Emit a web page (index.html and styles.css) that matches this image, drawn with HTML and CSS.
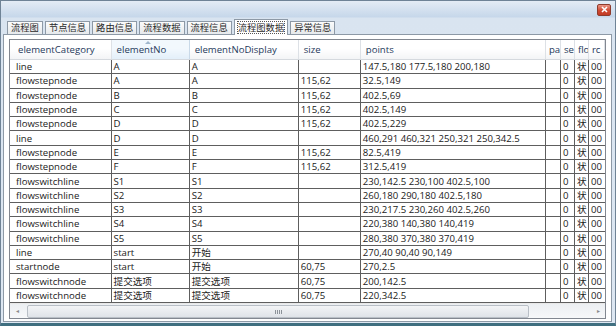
FILE: index.html
```html
<!DOCTYPE html>
<html lang="zh">
<head>
  <meta charset="UTF-8">
  <title>流程图数据</title>
  <link rel="stylesheet" href="styles.css">
</head>
<body>
  <div class="window">
    <div class="titlebar">
      <span class="close-btn" aria-label="Close">
        <svg width="7" height="7" viewBox="0 0 7 7"><path d="M1 1 L6 6 M6 1 L1 6" stroke="#fff" stroke-width="1.6"/></svg>
      </span>
    </div>
    <div class="tabs">
      <span class="tab">流程图</span>
      <span class="tab">节点信息</span>
      <span class="tab">路由信息</span>
      <span class="tab">流程数据</span>
      <span class="tab">流程信息</span>
      <span class="tab active"><span class="focus">流程图数据</span></span>
      <span class="tab">异常信息</span>
    </div>
    <div class="panel">
      <div class="grid">
        <table>
          <colgroup>
            <col style="width:101px">
            <col style="width:78px">
            <col style="width:109px">
            <col style="width:62px">
            <col style="width:185px">
            <col style="width:15px">
            <col style="width:14px">
            <col style="width:14px">
            <col style="width:16px">
          </colgroup>
          <thead>
            <tr>
              <th>elementCategory</th>
              <th class="sorted">elementNo<span class="sort-arrow"></span></th>
              <th>elementNoDisplay</th>
              <th>size</th>
              <th>points</th>
              <th class="narrow">pa</th>
              <th class="narrow">se</th>
              <th class="narrow">flo</th>
              <th class="narrow">rc</th>
            </tr>
          </thead>
          <tbody id="rows"></tbody>
        </table>
        <div class="hscroll">
          <span class="arrow left">&#9666;</span>
          <div class="track">
            <div class="thumb"><span class="grip"></span></div>
          </div>
          <span class="arrow right">&#9656;</span>
        </div>
      </div>
    </div>
  </div>

  <script>
    const data = [
      ["line", "A", "A", "", "147.5,180 177.5,180 200,180"],
      ["flowstepnode", "A", "A", "115,62", "32.5,149"],
      ["flowstepnode", "B", "B", "115,62", "402.5,69"],
      ["flowstepnode", "C", "C", "115,62", "402.5,149"],
      ["flowstepnode", "D", "D", "115,62", "402.5,229"],
      ["line", "D", "D", "", "460,291 460,321 250,321 250,342.5"],
      ["flowstepnode", "E", "E", "115,62", "82.5,419"],
      ["flowstepnode", "F", "F", "115,62", "312.5,419"],
      ["flowswitchline", "S1", "S1", "", "230,142.5 230,100 402.5,100"],
      ["flowswitchline", "S2", "S2", "", "260,180 290,180 402.5,180"],
      ["flowswitchline", "S3", "S3", "", "230,217.5 230,260 402.5,260"],
      ["flowswitchline", "S4", "S4", "", "220,380 140,380 140,419"],
      ["flowswitchline", "S5", "S5", "", "280,380 370,380 370,419"],
      ["line", "start", "开始", "", "270,40 90,40 90,149"],
      ["startnode", "start", "开始", "60,75", "270,2.5"],
      ["flowswitchnode", "提交选项", "提交选项", "60,75", "200,142.5"],
      ["flowswitchnode", "提交选项", "提交选项", "60,75", "220,342.5"]
    ];

    const tbody = document.getElementById("rows");
    data.forEach(row => {
      const tr = document.createElement("tr");
      row.concat(["", "0", "状", "00"]).forEach(value => {
        const td = document.createElement("td");
        td.textContent = value;
        tr.appendChild(td);
      });
      tbody.appendChild(tr);
    });
  </script>
</body>
</html>
```

FILE: styles.css
```css
body {
  margin: 0;
  background: #ffffff;
  font-family: 'Open Sans', 'Noto Sans CJK SC', sans-serif;
}

.window {
  box-sizing: border-box;
  width: 616px;
  height: 326px;
  border: 1px solid #6f8396;
  border-bottom: 3px solid #3f6f80;
  background: linear-gradient(#e4ecf5 0, #c6d7ea 16px, #d9e4f0 17px, #dde7f2 100%);
  display: flex;
  flex-direction: column;
}

.titlebar {
  height: 17px;
  display: flex;
  justify-content: flex-end;
  align-items: center;
  padding-right: 4px;
}

.close-btn {
  width: 12px;
  height: 10px;
  border: 1px solid #8e3b2c;
  border-radius: 2px;
  background: linear-gradient(#e99585, #cf4a33 55%, #c23a24);
  display: flex;
  align-items: center;
  justify-content: center;
}

.tabs {
  height: 16px;
  display: flex;
  align-items: flex-end;
  padding-left: 6px;
  gap: 2px;
  font-size: 9.3px;
  color: #2a2a2a;
}

.tab {
  height: 12px;
  line-height: 12px;
  padding: 0 3px;
  border: 1px solid #8d99a6;
  border-bottom: none;
  background: linear-gradient(#fbfbfb, #e6e9ec);
  white-space: nowrap;
}

.tab.active {
  height: 15px;
  line-height: 15px;
  background: #ffffff;
  position: relative;
  top: 1px;
  padding: 0 2px;
}

.focus {
  outline: 1px dotted #555;
  outline-offset: -1px;
  padding: 0 1px;
}

.panel {
  flex: 1;
  margin: 0 3px 1px 2px;
  border: 1px solid #8d99a6;
  background: #ffffff;
  padding: 4px 5px 1px 5px;
}

.grid {
  border: 1px solid #828790;
  box-sizing: border-box;
  width: 597px;
}

table {
  border-collapse: collapse;
  table-layout: fixed;
  width: 595px;
  font-size: 9.6px;
  color: #1a1a1a;
}

th {
  height: 19px;
  padding: 0 0 0 5px;
  font-weight: normal;
  text-align: left;
  color: #1e395b;
  background: linear-gradient(#ffffff 45%, #f3f4f6);
  border-right: 1px solid #dde1e6;
  border-bottom: 1px solid #d5d9de;
  white-space: nowrap;
  overflow: hidden;
  position: relative;
}

th:first-child {
  padding-left: 8px;
}

th.narrow {
  padding-left: 3px;
  text-overflow: clip;
}

th.sorted {
  background: linear-gradient(#f2f8fd 45%, #e3eff9);
  border-right-color: #c9d9e8;
}

.sort-arrow {
  position: absolute;
  top: 1px;
  left: 33px;
  width: 0;
  height: 0;
  border-left: 3px solid transparent;
  border-right: 3px solid transparent;
  border-bottom: 3px solid #9fb6cc;
}

td {
  height: 13.3px;
  padding: 0 0 0 2px;
  border: 1px solid #5e5e5e;
  white-space: nowrap;
  overflow: hidden;
  line-height: 13px;
}

td:first-child {
  border-left: none;
  padding-left: 6px;
}

td:last-child {
  border-right: none;
}

.hscroll {
  height: 14px;
  display: flex;
  align-items: center;
  background: linear-gradient(#eceff2, #f7f8f9);
  border-top: 1px solid #e8e8e8;
}

.arrow {
  width: 14px;
  font-size: 6px;
  color: #8a8a8a;
  text-align: center;
}

.track {
  flex: 1;
  height: 12px;
  display: flex;
}

.thumb {
  width: 500px;
  margin-left: 3px;
  height: 11px;
  border: 1px solid #b9bfc6;
  border-radius: 2px;
  background: linear-gradient(#f3f4f6, #dfe3e8);
  display: flex;
  justify-content: center;
  align-items: center;
}

.grip {
  width: 7px;
  height: 4px;
  background: repeating-linear-gradient(90deg, #8c9299 0, #8c9299 1px, transparent 1px, transparent 2px);
}
```
